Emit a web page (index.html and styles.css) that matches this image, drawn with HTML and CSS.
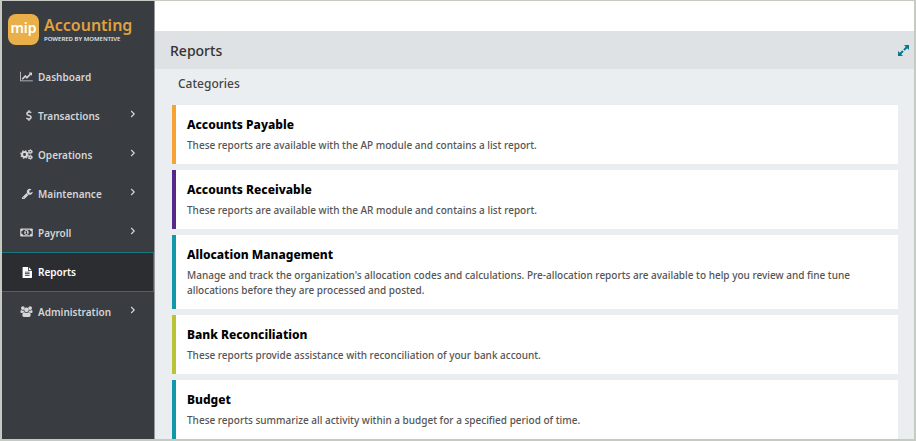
FILE: index.html
```html
<!DOCTYPE html>
<html lang="en">
<head>
    <meta charset="UTF-8">
    <meta name="viewport" content="width=device-width, initial-scale=1.0">
    <title>Reports - MIP Accounting</title>
    <link rel="stylesheet" href="styles.css">
</head>
<body>
    <div class="container">
        <aside class="sidebar">
            <a href="#" class="brand">
                <span class="brand-badge">mip</span>
                <span class="brand-text">
                    <span class="brand-name">Accounting</span>
                    <span class="brand-tagline">POWERED BY MOMENTIVE</span>
                </span>
            </a>
            <nav class="menu">
                <a href="#" class="menu-item">
                    <svg class="icon" viewBox="0 0 2048 1792"><path d="M2048 1536v128h-2048v-1536h128v1408h1920zm-128-1248v435q0 21-19.500 29.500t-35.500-7.500l-121-121-633 633q-10 10-23 10t-23-10l-233-233-416 416-192-192 585-585q10-10 23-10t23 10l233 233 464-464-121-121q-16-16-7.500-35.500t29.500-19.500h435q14 0 23 9t9 23z"/></svg>
                    <span class="label">Dashboard</span>
                </a>
                <a href="#" class="menu-item">
                    <svg class="icon" viewBox="-700 0 2048 1792"><path transform="translate(-180 0)" d="M1362 1185q0 153-99.500 263.500t-258.500 136.500v175q0 14-9 23t-23 9h-135q-13 0-22.500-9.500t-9.500-22.500v-175q-66-9-127.500-31t-101.500-44.500-74-48-46.500-37.500-17.500-18q-17-21-2-41l103-135q7-10 23-12 15-2 24 9l2 2q113 99 243 125 37 8 74 8 81 0 142.500-43t61.500-122q0-28-15-53t-33.500-42-58.500-37.500-66-32-80-32.500q-39-16-61.500-25t-61.500-26.500-62.500-31-56.500-35.500-53.500-42.500-43.500-49-35.500-58-21-66.500-8.500-78q0-138 98-242t255-134v-180q0-13 9.500-22.500t22.500-9.500h135q14 0 23 9t9 23v176q57 6 110.500 23t87 33.500 63.500 37.500 39 29 15 14q17 18 5 38l-81 146q-8 15-23 16-14 3-27-7-3-3-14.500-12t-39-26.500-58.500-32-74.500-26-85.500-11.500q-95 0-155 43t-60 111q0 26 8.500 48t29.500 41.500 39.500 33 56 31 60.500 27 70 27.500q53 20 81 31.500t76 35 75.500 42.500 62 50 53 63.500 31.500 76.500 13 94z"/></svg>
                    <span class="label">Transactions</span>
                    <svg class="arrow" viewBox="0 0 6 8"><path d="M1.200 1l3 3-3 3"/></svg>
                </a>
                <a href="#" class="menu-item">
                    <svg class="icon" viewBox="0 0 16 14">
                        <g fill="none" stroke="currentColor">
                            <circle cx="5.500" cy="7" r="3.200" stroke-width="2.600"/>
                            <circle cx="5.500" cy="7" r="4.700" stroke-width="1.600" stroke-dasharray="1.850 1.850"/>
                            <circle cx="12.800" cy="3.400" r="1.700" stroke-width="1.700"/>
                            <circle cx="12.800" cy="3.400" r="2.700" stroke-width="1" stroke-dasharray="1.400 1.400"/>
                            <circle cx="12.800" cy="10.600" r="1.700" stroke-width="1.700"/>
                            <circle cx="12.800" cy="10.600" r="2.700" stroke-width="1" stroke-dasharray="1.400 1.400"/>
                        </g>
                    </svg>
                    <span class="label">Operations</span>
                    <svg class="arrow" viewBox="0 0 6 8"><path d="M1.200 1l3 3-3 3"/></svg>
                </a>
                <a href="#" class="menu-item">
                    <svg class="icon" viewBox="-160 0 1900 1664"><path d="M448 1472q0-26-19-45t-45-19-45 19-19 45 19 45 45 19 45-19 19-45zm644-420l-682 682q-37 37-90 37-52 0-91-37l-106-108q-38-36-38-90 0-53 38-91l681-681q39 98 114.500 173.500t173.500 114.500zm634-435q0 39-23 106-47 134-164.500 217.500t-258.500 83.500q-185 0-316.500-131.500t-131.500-316.500 131.500-316.500 316.500-131.500q58 0 121.500 16.500t107.500 46.500q16 11 16 28t-16 28l-293 169v224l193 107q5-3 79-48.500t135.500-81 70.500-35.500q15 0 23.500 10t8.500 25z"/></svg>
                    <span class="label">Maintenance</span>
                    <svg class="arrow" viewBox="0 0 6 8"><path d="M1.200 1l3 3-3 3"/></svg>
                </a>
                <a href="#" class="menu-item">
                    <svg class="icon" viewBox="0 0 16 14"><path fill-rule="evenodd" d="M1 2h14q1 0 1 1v8q0 1-1 1H1q-1 0-1-1V3q0-1 1-1zm2.700 1.500q0 1.800-2.200 1.800v3.400q2.200 0 2.200 1.800h8.600q0-1.800 2.200-1.800V5.300q-2.200 0-2.200-1.800zM8 3.700c3.800 0 3.800 6.600 0 6.600s-3.800-6.600 0-6.600zM7.600 5L6.300 6l.5.700.6-.4v1.900h-1v.9h3.200v-.9h-.9V5z"/></svg>
                    <span class="label">Payroll</span>
                    <svg class="arrow" viewBox="0 0 6 8"><path d="M1.200 1l3 3-3 3"/></svg>
                </a>
                <a href="#" class="menu-item active">
                    <svg class="icon" viewBox="-384 0 2048 1792"><path d="M1468 476q14 14 28 36h-472v-472q22 14 36 28zm-476 164h544v1056q0 40-28 68t-68 28h-1344q-40 0-68-28t-28-68v-1600q0-40 28-68t68-28h800v544q0 40 28 68t68 28zm160 736v-64q0-14-9-23t-23-9h-704q-14 0-23 9t-9 23v64q0 14 9 23t23 9h704q14 0 23-9t9-23zm0-256v-64q0-14-9-23t-23-9h-704q-14 0-23 9t-9 23v64q0 14 9 23t23 9h704q14 0 23-9t9-23zm0-256v-64q0-14-9-23t-23-9h-704q-14 0-23 9t-9 23v64q0 14 9 23t23 9h704q14 0 23-9t9-23z"/></svg>
                    <span class="label">Reports</span>
                </a>
                <a href="#" class="menu-item">
                    <svg class="icon" viewBox="0 0 16 14">
                        <circle cx="3.400" cy="2.600" r="2.400"/>
                        <circle cx="12.600" cy="2.600" r="2.400"/>
                        <circle cx="8" cy="4.800" r="3"/>
                        <path d="M1.400 5.200q2 1.200 3.200.5Q4.900 7 5.400 7.600 3.600 7.600 2.900 9H1.600Q.3 9 .3 7.600.3 5.500 1.400 5.200zM14.600 5.200q-2 1.200-3.200.5-.3 1.300-.8 1.900 1.800 0 2.500 1.400h1.300q1.300 0 1.300-1.400 0-2.100-1.100-2.400zM5.200 8q2.800 2 5.600 0 2.500 0 2.500 3.900 0 2-2 2H4.700q-2 0-2-2Q2.700 8 5.200 8z"/>
                    </svg>
                    <span class="label">Administration</span>
                    <svg class="arrow" viewBox="0 0 6 8"><path d="M1.200 1l3 3-3 3"/></svg>
                </a>
            </nav>
        </aside>
        <main class="content">
            <header class="page-header">
                <h1>Reports</h1>
                <button type="button" class="expand" aria-label="Expand">
                    <svg viewBox="0 0 12 12"><path d="M6.500 0H12v5.500l-2-2L7.300 6.200 5.800 4.700 8.500 2zM5.500 12H0V6.500l2 2 2.700-2.700 1.500 1.500L3.500 10z"/></svg>
                </button>
            </header>
            <section class="categories">
                <h2>Categories</h2>
                <div class="card orange">
                    <h3>Accounts Payable</h3>
                    <p>These reports are available with the AP module and contains a list report.</p>
                </div>
                <div class="card purple">
                    <h3>Accounts Receivable</h3>
                    <p>These reports are available with the AR module and contains a list report.</p>
                </div>
                <div class="card teal">
                    <h3>Allocation Management</h3>
                    <p>Manage and track the organization's allocation codes and calculations. Pre-allocation reports are available to help you review and fine tune allocations before they are processed and posted.</p>
                </div>
                <div class="card green">
                    <h3>Bank Reconciliation</h3>
                    <p>These reports provide assistance with reconciliation of your bank account.</p>
                </div>
                <div class="card teal">
                    <h3>Budget</h3>
                    <p>These reports summarize all activity within a budget for a specified period of time.</p>
                </div>
            </section>
        </main>
    </div>
</body>
</html>
```
FILE: styles.css
```css
* {
    margin: 0;
    padding: 0;
    box-sizing: border-box;
    font-family: "Noto Sans", "Open Sans", sans-serif;
}
body {
    background: #fff;
}
.container {
    display: flex;
    min-height: 100vh;
    border: 2px solid #c5cbc3;
    border-top-width: 1px;
}
.sidebar {
    flex: none;
    width: 153px;
    background: #393c41;
    border-right: 1px solid #94979b;
}
.brand {
    display: flex;
    align-items: center;
    gap: 5px;
    height: 56px;
    padding-left: 6px;
    text-decoration: none;
}
.brand-badge {
    width: 31px;
    height: 31px;
    border-radius: 8px;
    background: #e9b04a;
    color: #fff;
    font-size: 14px;
    font-weight: 600;
    line-height: 28px;
    text-align: center;
}
.brand-text {
    display: flex;
    flex-direction: column;
}
.brand-name {
    color: #dfa23f;
    font-size: 16px;
    font-weight: 600;
    line-height: 20px;
}
.brand-tagline {
    color: #e4e4e4;
    font-size: 6px;
    font-weight: 600;
    line-height: 8px;
}
.menu-item {
    display: flex;
    align-items: center;
    height: 39px;
    padding: 0 18px;
    color: #d4d5d6;
    font-size: 10px;
    font-weight: 600;
    text-decoration: none;
}
.menu-item.active {
    height: 40px;
    border: 1px solid #19777f;
    border-left: none;
    background: #2c2d31;
    color: #fff;
}
.icon {
    width: 13px;
    height: 11px;
    margin-right: 5px;
    fill: currentColor;
}
.label {
    flex: 1;
}
.arrow {
    width: 6px;
    height: 8px;
    margin-bottom: 4px;
    fill: none;
    stroke: currentColor;
    stroke-width: 1.2;
}
.content {
    flex: 1;
    padding-top: 30px;
    background: #fff;
    display: flex;
    flex-direction: column;
}
.page-header {
    display: flex;
    align-items: center;
    justify-content: space-between;
    height: 38px;
    padding: 0 5px 0 15px;
    background: #dfe2e4;
}
.page-header h1 {
    color: #333;
    font-size: 14px;
    font-weight: 500;
}
.expand {
    width: 11px;
    height: 11px;
    border: none;
    background: none;
    cursor: pointer;
}
.expand svg {
    display: block;
    width: 11px;
    height: 11px;
    fill: #067a8c;
}
.categories {
    flex: 1;
    display: flex;
    flex-direction: column;
    gap: 6px;
    padding: 0 16px 0 17px;
    background: #ebeef1;
}
.categories h2 {
    padding-left: 6px;
    color: #444;
    font-size: 12px;
    font-weight: 500;
    line-height: 30px;
}
.card {
    padding: 10px 15px 11px 11px;
    border-left: 4px solid;
    background: #fff;
}
.card h3 {
    color: #000;
    font-size: 12px;
    font-weight: 800;
    line-height: 20px;
    margin-bottom: 3px;
}
.card p {
    color: #555;
    font-size: 10px;
    font-weight: 500;
    line-height: 15px;
}
.orange {
    border-color: #f7a233;
}
.purple {
    border-color: #56288a;
}
.teal {
    border-color: #1298a8;
}
.green {
    border-color: #bac235;
}
```
